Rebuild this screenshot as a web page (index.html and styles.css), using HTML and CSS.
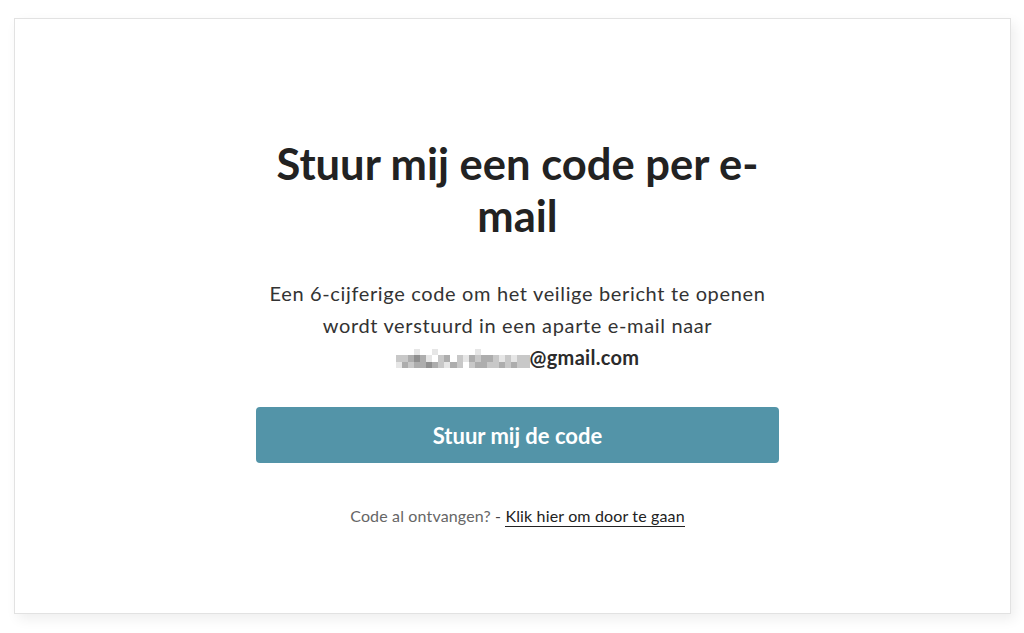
FILE: index.html
```html
<!DOCTYPE html>
<html lang="nl">
<head>
<meta charset="utf-8">
<title>Stuur mij een code per e-mail</title>
<link rel="stylesheet" href="styles.css">
</head>
<body>
<main class="card">
  <section class="content">
    <h1 class="title">Stuur mij een code per e-mail</h1>
    <p class="desc">Een 6-cijferige code om het veilige bericht te openen wordt verstuurd in een aparte e-mail naar <span class="email"><span class="blur" aria-hidden="true"><span class="grid"><i class="c0"></i><i class="c0"></i><i class="c0"></i><i class="c1"></i><i class="c0"></i><i class="c0"></i><i class="c1"></i><i class="c0"></i><i class="c0"></i><i class="c0"></i><i class="c0"></i><i class="c0"></i><i class="c0"></i><i class="c1"></i><i class="c0"></i><i class="c0"></i><i class="c0"></i><i class="c0"></i><i class="c0"></i><i class="c0"></i><i class="c0"></i><i class="c0"></i><i class="c2"></i><i class="c2"></i><i class="c3"></i><i class="c4"></i><i class="c3"></i><i class="c1"></i><i class="c0"></i><i class="c2"></i><i class="c3"></i><i class="c0"></i><i class="c2"></i><i class="c1"></i><i class="c3"></i><i class="c2"></i><i class="c3"></i><i class="c3"></i><i class="c2"></i><i class="c1"></i><i class="c2"></i><i class="c1"></i><i class="c2"></i><i class="c2"></i><i class="c1"></i><i class="c3"></i><i class="c2"></i><i class="c3"></i><i class="c3"></i><i class="c4"></i><i class="c3"></i><i class="c2"></i><i class="c1"></i><i class="c3"></i><i class="c2"></i><i class="c0"></i><i class="c2"></i><i class="c3"></i><i class="c3"></i><i class="c2"></i><i class="c2"></i><i class="c3"></i><i class="c2"></i><i class="c3"></i><i class="c2"></i><i class="c2"></i></span></span>@gmail.com</span></p>
    <button class="btn" type="button">Stuur mij de code</button>
    <p class="foot"><span class="muted">Code al ontvangen?</span> <span class="dash">-</span> <a class="link" href="#">Klik hier om door te gaan</a></p>
  </section>
</main>
</body>
</html>
```
FILE: styles.css
```css
html, body {
  margin: 0;
  padding: 0;
  background: #ffffff;
}
body {
  font-family: Lato, "Open Sans", Arial, sans-serif;
  color: #222;
  padding: 18px 0 0 14px;
  width: 1024px;
  height: 633px;
  box-sizing: border-box;
}
.card {
  width: 997px;
  height: 596px;
  box-sizing: border-box;
  border: 1px solid #e2e2e2;
  background: #fff;
  box-shadow: 4px 5px 12px rgba(0, 0, 0, 0.07);
  display: flex;
  justify-content: center;
}
.content {
  width: 523px;
  margin-left: 10px;
  padding-top: 118px;
  display: flex;
  flex-direction: column;
  align-items: center;
  text-align: center;
}
.title {
  margin: 0;
  font-size: 43.5px;
  line-height: 52px;
  font-weight: 700;
  color: #222;
}
.desc {
  margin: 36px 0 0;
  font-size: 20px;
  letter-spacing: 0.65px;
  line-height: 32px;
  color: #333;
  width: 523px;
}
.email {
  font-weight: 700;
  color: #2b2b2b;
  white-space: nowrap;
  letter-spacing: 0.3px;
}
.blur {
  display: inline-block;
  overflow: hidden;
  vertical-align: -3px;
  width: 134px;
  height: 19px;
}
.grid {
  display: grid;
  grid-template-columns: repeat(22, 6.1px);
  grid-auto-rows: 6.3px;
}
.grid i { display: block; }
.c0 { background: #ffffff; }
.c1 { background: #e6e6e6; }
.c2 { background: #c8c8c8; }
.c3 { background: #adadad; }
.c4 { background: #8f8f8f; }
.btn {
  margin-top: 34px;
  width: 523px;
  height: 56px;
  border: none;
  border-radius: 4px;
  background: #5394a8;
  color: #fff;
  font-family: Lato, "Open Sans", Arial, sans-serif;
  font-weight: 700;
  font-size: 22px;
  cursor: pointer;
}
.foot {
  margin: 43px 0 0;
  font-size: 16px;
  letter-spacing: 0.15px;
  line-height: 20px;
}
.muted { color: #666; }
.dash { color: #444; }
.link {
  color: #222;
  text-decoration: none;
  border-bottom: 1px solid #222;
  padding-bottom: 1px;
}
```
